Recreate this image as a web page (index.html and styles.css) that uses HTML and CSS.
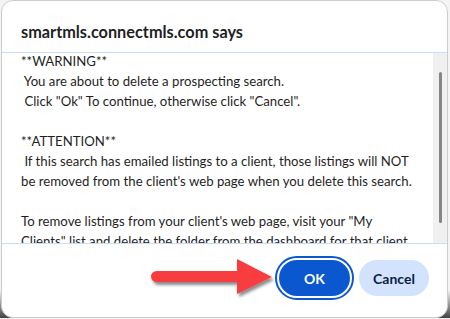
FILE: index.html
```html
<!DOCTYPE html>
<html lang="en">
<head>
    <meta charset="UTF-8">
    <meta name="viewport" content="width=device-width, initial-scale=1.0">
    <title>smartmls.connectmls.com says</title>
    <link rel="stylesheet" href="styles.css">
</head>
<body>
    <div class="dialog">
        <!-- Titel -->
        <div class="dialog-header">
            <h1>smartmls.connectmls.com says</h1>
        </div>

        <!-- Nachricht mit Scrollleiste -->
        <div class="dialog-body">
            <div class="message">
<pre>**WARNING**
 You are about to delete a prospecting search.
 Click "Ok" To continue, otherwise click "Cancel".

**ATTENTION**
 If this search has emailed listings to a client, those listings will NOT
be removed from the client's web page when you delete this search.

To remove listings from your client's web page, visit your "My
Clients" list and delete the folder from the dashboard for that client.</pre>
            </div>
            <div class="scrollbar">
                <div class="thumb"></div>
            </div>
        </div>

        <!-- Buttons -->
        <div class="dialog-footer">
            <svg class="arrow" width="130" height="44" viewBox="0 0 130 44">
                <defs>
                    <filter id="shadow" x="-10%" y="-20%" width="130%" height="160%">
                        <feDropShadow dx="2" dy="3" stdDeviation="1.5" flood-color="#000" flood-opacity="0.45"/>
                    </filter>
                </defs>
                <g filter="url(#shadow)" fill="#f73c41">
                    <path d="M8.5 15 H92 V26 H8.5 A5.5 5.5 0 0 1 8.5 15 Z"/>
                    <polygon points="89,3 124,21 89,38"/>
                </g>
            </svg>
            <button class="btn btn-ok">OK</button>
            <button class="btn btn-cancel">Cancel</button>
        </div>
    </div>
</body>
</html>
```

FILE: styles.css
```css
html {
    background: linear-gradient(to bottom, #f4f4f4 0, #f4f4f4 290px, #3c3c3c 319px);
}
body {
    margin: 0;
    font-family: Lato, 'Open Sans', sans-serif;
    color: #1f1f1f;
}
.dialog {
    margin: 0 2px 0 1px;
    height: 318px;
    box-sizing: border-box;
    border: 1px solid #cdcdcd;
    border-radius: 12px;
    background-color: #ffffff;
    overflow: hidden;
    display: flex;
    flex-direction: column;
}
.dialog-header {
    height: 52px;
    box-sizing: border-box;
    padding: 20px 19px 0;
    border-bottom: 1px solid #c8dcf7;
}
.dialog-header h1 {
    margin: 0;
    font-size: 16.3px;
    line-height: 22px;
    font-weight: 700;
    color: #1f1f1f;
}
.dialog-body {
    height: 190px;
    display: flex;
}
.message {
    flex: 1;
    overflow: hidden;
    padding-left: 19px;
}
.message pre {
    margin: -2px 0 0;
    font-family: Lato, 'Open Sans', sans-serif;
    font-size: 13.2px;
    line-height: 20px;
    color: #1f1f1f;
    white-space: pre;
}
.scrollbar {
    width: 14px;
    background-color: #f0f0f0;
    padding-top: 19px;
    box-sizing: border-box;
}
.thumb {
    width: 3px;
    height: 151px;
    margin-left: 6px;
    background-color: #858585;
    border-radius: 2px;
}
.dialog-footer {
    position: relative;
    flex: 1;
    border-top: 1px solid #c8dcf7;
    display: flex;
    justify-content: flex-end;
    align-items: flex-start;
    gap: 9px;
    padding: 16px 18px 0 0;
}
.btn {
    height: 36px;
    border: none;
    border-radius: 18px;
    font-family: Lato, 'Open Sans', sans-serif;
    font-size: 14px;
    cursor: pointer;
}
.btn-ok {
    width: 71px;
    background-color: #0b57d0;
    color: #ffffff;
    font-weight: 700;
    outline: 2px solid #0b57d0;
    outline-offset: 2px;
}
.btn-cancel {
    width: 70px;
    background-color: #d3e3fd;
    color: #0a1f44;
    font-weight: 700;
}
/* Roter Pfeil über dem Footer */
.arrow {
    position: absolute;
    left: 146px;
    top: 12px;
}
```
